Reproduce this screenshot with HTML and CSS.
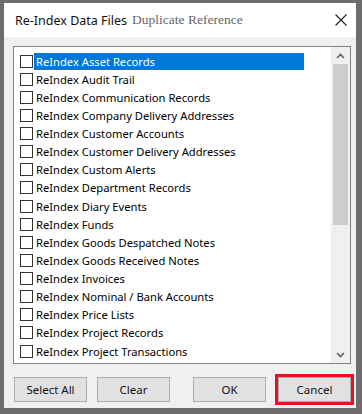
FILE: index.html
```html
<!DOCTYPE html>
<html lang="en">
<head>
  <meta charset="UTF-8" />
  <title>Re-Index Data Files</title>
  <link rel="stylesheet" href="styles.css">
</head>
<body>
  <div class="dialog">
    <!-- Barra de título -->
    <div class="titlebar">
      <span class="title">Re-Index Data Files</span>
      <span class="subtitle">Duplicate Reference</span>
      <svg class="close" width="12" height="12" viewBox="0 0 12 12">
        <path d="M0.5 0.5 L11.5 11.5 M11.5 0.5 L0.5 11.5" stroke="#222" stroke-width="1.1" fill="none"/>
      </svg>
    </div>
    <div class="content">
      <!-- Lista con casillas -->
      <div class="listbox">
        <ul class="items">
          <li class="item selected"><span class="check"></span><span class="label">ReIndex Asset Records</span></li>
          <li class="item"><span class="check"></span><span class="label">ReIndex Audit Trail</span></li>
          <li class="item"><span class="check"></span><span class="label">ReIndex Communication Records</span></li>
          <li class="item"><span class="check"></span><span class="label">ReIndex Company Delivery Addresses</span></li>
          <li class="item"><span class="check"></span><span class="label">ReIndex Customer Accounts</span></li>
          <li class="item"><span class="check"></span><span class="label">ReIndex Customer Delivery Addresses</span></li>
          <li class="item"><span class="check"></span><span class="label">ReIndex Custom Alerts</span></li>
          <li class="item"><span class="check"></span><span class="label">ReIndex Department Records</span></li>
          <li class="item"><span class="check"></span><span class="label">ReIndex Diary Events</span></li>
          <li class="item"><span class="check"></span><span class="label">ReIndex Funds</span></li>
          <li class="item"><span class="check"></span><span class="label">ReIndex Goods Despatched Notes</span></li>
          <li class="item"><span class="check"></span><span class="label">ReIndex Goods Received Notes</span></li>
          <li class="item"><span class="check"></span><span class="label">ReIndex Invoices</span></li>
          <li class="item"><span class="check"></span><span class="label">ReIndex Nominal / Bank Accounts</span></li>
          <li class="item"><span class="check"></span><span class="label">ReIndex Price Lists</span></li>
          <li class="item"><span class="check"></span><span class="label">ReIndex Project Records</span></li>
          <li class="item"><span class="check"></span><span class="label">ReIndex Project Transactions</span></li>
        </ul>
        <!-- Barra de desplazamiento -->
        <div class="scrollbar">
          <div class="arrow">
            <svg width="9" height="6" viewBox="0 0 9 6"><path d="M1 5 L4.5 1.5 L8 5" stroke="#606060" stroke-width="1.6" fill="none"/></svg>
          </div>
          <div class="track">
            <div class="thumb"></div>
          </div>
          <div class="arrow">
            <svg width="9" height="6" viewBox="0 0 9 6"><path d="M1 1 L4.5 4.5 L8 1" stroke="#606060" stroke-width="1.6" fill="none"/></svg>
          </div>
        </div>
      </div>
      <!-- Botones -->
      <div class="buttons">
        <button class="btn">Select All</button>
        <button class="btn">Clear</button>
        <button class="btn btn-ok">OK</button>
        <button class="btn btn-cancel">Cancel</button>
      </div>
    </div>
  </div>
</body>
</html>
```

FILE: styles.css
```css
* {
  margin: 0;
  padding: 0;
  box-sizing: border-box;
}
body {
  background: #6d6d6d;
  font-family: "Noto Sans", "Liberation Sans", sans-serif;
  color: #000;
  width: 362px;
  height: 414px;
  overflow: hidden;
}
.dialog {
  margin: 3px 6px 0 4px;
  height: 405px;
  background: #f0f0f0;
  display: flex;
  flex-direction: column;
}
/* Barra de título */
.titlebar {
  height: 34px;
  background: #fff;
  display: flex;
  align-items: center;
  padding: 0 9px 0 11px;
}
.title {
  font-size: 12.5px;
  color: #111;
}
.subtitle {
  font-family: "Liberation Serif", serif;
  font-size: 13.5px;
  color: #666;
  margin-left: 5px;
}
.close {
  margin-left: auto;
}
/* Contenido */
.content {
  flex: 1;
  padding: 9px 5px 0 9px;
  display: flex;
  flex-direction: column;
}
.listbox {
  height: 318px;
  border: 1px solid #828282;
  background: #fff;
  display: flex;
  overflow: hidden;
}
.items {
  list-style: none;
  flex: 1;
  padding-top: 5px;
}
.item {
  height: 18.125px;
  display: flex;
  align-items: center;
  padding-left: 6px;
  font-size: 11.2px;
  white-space: nowrap;
}
.check {
  width: 13px;
  height: 13px;
  border: 1px solid #333;
  background: #fff;
  flex-shrink: 0;
}
.label {
  width: 270px;
  height: 17px;
  line-height: 17px;
  margin-left: 1px;
  padding-left: 2px;
}
.item.selected .label {
  background: #0078d7;
  color: #fff;
}
/* Barra de desplazamiento */
.scrollbar {
  width: 19px;
  display: flex;
  flex-direction: column;
  background: #f0f0f0;
  padding: 0 2px;
}
.arrow {
  height: 17px;
  display: flex;
  align-items: center;
  justify-content: center;
}
.track {
  flex: 1;
}
.thumb {
  height: 161px;
  background: #cdcdcd;
}
/* Botones */
.buttons {
  display: flex;
  margin-top: 13px;
  padding-left: 1px;
}
.btn {
  width: 73px;
  height: 25px;
  background: #e1e1e1;
  border: 1px solid #adadad;
  font-family: "Noto Sans", "Liberation Sans", sans-serif;
  font-size: 11.5px;
  color: #111;
}
.btn + .btn {
  margin-left: 10px;
}
.btn-ok {
  margin-left: 23px !important;
}
.btn-cancel {
  margin-left: 12px !important;
  outline: 3px solid #e81123;
  outline-offset: 0;
}
```
